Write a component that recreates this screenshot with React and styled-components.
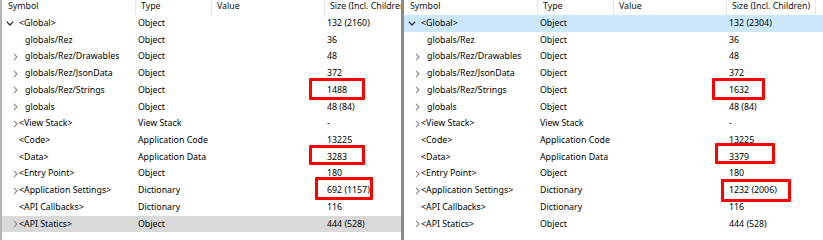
import React from "react";
import styled, { createGlobalStyle } from "styled-components";

const GlobalStyle = createGlobalStyle`
  html, body { margin: 0; padding: 0; background: #fff; }
  body { font-family: "Noto Sans", "Open Sans", sans-serif; font-size: 8.8px; color: #000; }
`;

const COLS = "133px 76px 113px 89px 1fr";
const ROW_H = 16.72;

const Screen = styled.div`
  display: flex;
  width: 823px;
  height: 240px;
  overflow: hidden;
  background: #fff;
`;

const Panel = styled.div`
  flex: ${(p) => (p.$grow ? "1 1 auto" : `0 0 ${p.$width}px`)};
  border-left: ${(p) => (p.$bordered ? "2px solid #b4b4b4" : "none")};
  overflow: hidden;
  display: flex;
  flex-direction: column;
`;

const Splitter = styled.div`
  flex: 0 0 3px;
  background: #8a8a8a;
`;

const HeaderRow = styled.div`
  display: grid;
  grid-template-columns: ${COLS};
  height: 15px;
  width: ${(p) => p.$width}px;
`;

const HeaderCell = styled.div`
  padding-left: ${(p) => (p.$first ? 6 : 5)}px;
  border-left: ${(p) => (p.$first ? "none" : "1px solid #e8e8e8")};
  line-height: 13px;
  white-space: nowrap;
  overflow: hidden;
  color: #111;
`;

const Row = styled.div`
  display: grid;
  grid-template-columns: ${COLS};
  height: ${ROW_H}px;
  width: ${(p) => p.$width}px;
  background: ${(p) =>
    p.$state === "selected" ? "#cce8ff" : p.$state === "gray" ? "#d9d9d9" : "transparent"};
`;

const Cell = styled.div`
  position: relative;
  padding-left: 3px;
  line-height: ${ROW_H}px;
  white-space: nowrap;
  color: #000;
`;

const SymbolCell = styled.div`
  display: flex;
  align-items: center;
  line-height: ${ROW_H}px;
  white-space: nowrap;
  color: #000;
`;

const Expander = styled.span`
  flex: 0 0 ${(p) => p.$indent}px;
  display: flex;
  align-items: center;
  height: 100%;
`;

const MarkBox = styled.span`
  position: absolute;
  left: ${(p) => p.$l}px;
  top: ${(p) => p.$t}px;
  width: ${(p) => p.$w}px;
  height: ${(p) => p.$h}px;
  border: 3px solid #ff0000;
  border-radius: 1px;
  box-sizing: border-box;
  pointer-events: none;
`;

const Dot = styled.span`
  display: block;
  width: 2px;
  height: 2px;
  margin: 7px 0 0 7px;
  background: #f3c35a;
`;

const ChevronRight = () => (
  <svg width="5" height="8" viewBox="0 0 5 8" style={{ marginLeft: 10.5 }}>
    <path d="M1 0.8 L4 4 L1 7.2" fill="none" stroke="#8a8a8a" strokeWidth="1.1" />
  </svg>
);

const ChevronDown = () => (
  <svg width="8" height="5" viewBox="0 0 8 5" style={{ marginLeft: 4 }}>
    <path d="M0.8 0.8 L4 4 L7.2 0.8" fill="none" stroke="#333" strokeWidth="1.3" />
  </svg>
);

const rows = [
  { name: "<Global>", type: "Object", lvl: 0, exp: "open", sizeL: "132 (2160)", sizeR: "132 (2304)" },
  { name: "globals/Rez", type: "Object", lvl: 1, exp: null, sizeL: "36", sizeR: "36" },
  { name: "globals/Rez/Drawables", type: "Object", lvl: 1, exp: "closed", sizeL: "48", sizeR: "48" },
  { name: "globals/Rez/JsonData", type: "Object", lvl: 1, exp: "closed", sizeL: "372", sizeR: "372" },
  {
    name: "globals/Rez/Strings", type: "Object", lvl: 1, exp: "closed", sizeL: "1488", sizeR: "1632",
    markL: { l: -15, t: -4, w: 56, h: 22 }, markR: { l: -14, t: -4, w: 53, h: 22 },
  },
  { name: "globals", type: "Object", lvl: 1, exp: "closed", sizeL: "48 (84)", sizeR: "48 (84)" },
  { name: "<View Stack>", type: "View Stack", lvl: 0, exp: "closed", sizeL: "-", sizeR: "-" },
  { name: "<Code>", type: "Application Code", lvl: 0, exp: null, sizeL: "13225", sizeR: "13225" },
  {
    name: "<Data>", type: "Application Data", lvl: 0, exp: null, sizeL: "3283", sizeR: "3379",
    markL: { l: -15, t: -4, w: 56, h: 20 }, markR: { l: -11, t: -6, w: 60, h: 21 },
  },
  { name: "<Entry Point>", type: "Object", lvl: 0, exp: "closed", sizeL: "180", sizeR: "180" },
  {
    name: "<Application Settings>", type: "Dictionary", lvl: 0, exp: "closed", sizeL: "692 (1157)", sizeR: "1232 (2006)",
    markL: { l: -9, t: -5, w: 58, h: 23 }, markR: { l: -5, t: -3, w: 70, h: 23 },
  },
  { name: "<API Callbacks>", type: "Dictionary", lvl: 0, exp: null, sizeL: "116", sizeR: "116" },
  { name: "<API Statics>", type: "Object", lvl: 0, exp: "closed", sizeL: "444 (528)", sizeR: "444 (528)" },
];

const TreePanel = ({ side, width }) => (
  <>
    <HeaderRow $width={width}>
      <HeaderCell $first>Symbol</HeaderCell>
      <HeaderCell>Type</HeaderCell>
      <HeaderCell>Value</HeaderCell>
      <HeaderCell>Size (Incl. Children)</HeaderCell>
      <HeaderCell />
    </HeaderRow>
    {rows.map((r, i) => {
      const size = side === "L" ? r.sizeL : r.sizeR;
      const mark = side === "L" ? r.markL : r.markR;
      let state = "none";
      if (side === "R" && i === 0) state = "selected";
      if (side === "L" && i === rows.length - 1) state = "gray";
      return (
        <Row key={i} $width={width} $state={state}>
          <SymbolCell>
            <Expander $indent={r.lvl === 0 ? 17 : 23}>
              {r.exp === "open" && <ChevronDown />}
              {r.exp === "closed" && <ChevronRight />}
            </Expander>
            {r.name}
          </SymbolCell>
          <Cell>{r.type}</Cell>
          <Cell />
          <Cell>
            {size}
            {mark && <MarkBox $l={mark.l} $t={mark.t} $w={mark.w} $h={mark.h} />}
          </Cell>
          <Cell>{side === "R" && <Dot />}</Cell>
        </Row>
      );
    })}
  </>
);

export default function App() {
  return (
    <>
      <GlobalStyle />
      <Screen>
        <Panel $width={399} $bordered>
          <TreePanel side="L" width={421} />
        </Panel>
        <Splitter />
        <Panel $grow>
          <TreePanel side="R" width={421} />
        </Panel>
      </Screen>
    </>
  );
}
